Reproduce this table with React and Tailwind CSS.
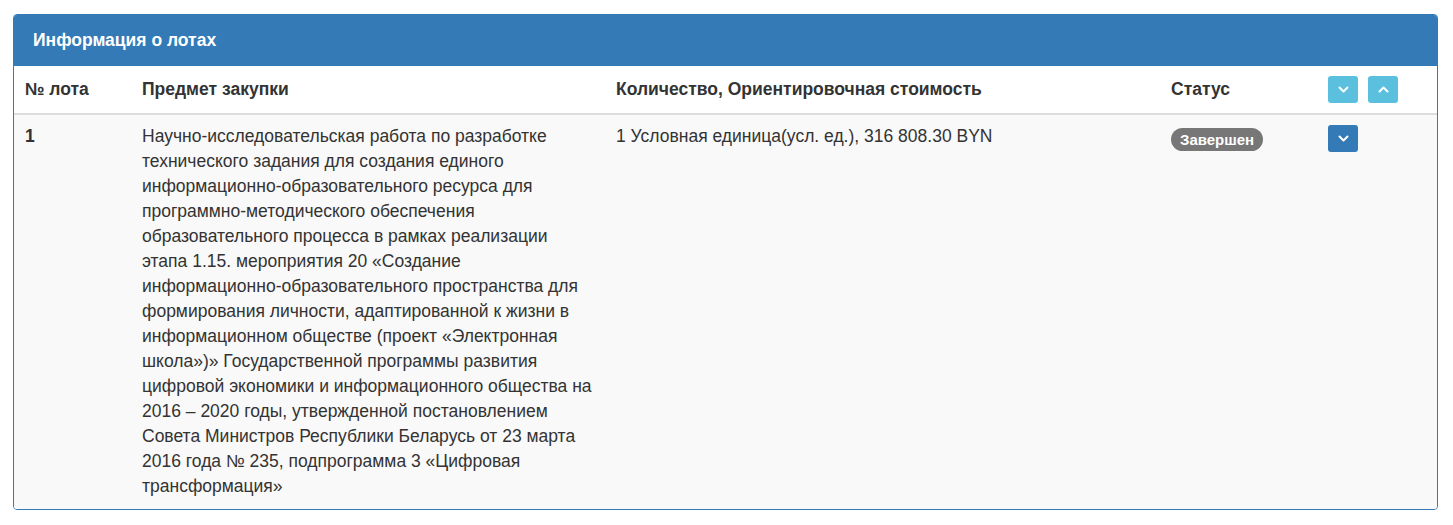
import React from 'react';

const Chevron = ({ up }) => (
  <svg width="13" height="13" viewBox="0 0 13 13" fill="none">
    <path
      d={up ? 'M2.5 8.5 L6.5 4.5 L10.5 8.5' : 'M2.5 4.5 L6.5 8.5 L10.5 4.5'}
      stroke="white"
      strokeWidth="2"
      strokeLinecap="round"
      strokeLinejoin="round"
    />
  </svg>
);

const subject =
  'Научно-исследовательская работа по разработке технического задания для создания единого информационно-образовательного ресурса для программно-методического обеспечения образовательного процесса в рамках реализации этапа 1.15. мероприятия 20 «Создание информационно-образовательного пространства для формирования личности, адаптированной к жизни в информационном обществе (проект «Электронная школа»)» Государственной программы развития цифровой экономики и информационного общества на 2016 – 2020 годы, утвержденной постановлением Совета Министров Республики Беларусь от 23 марта 2016 года № 235, подпрограмма 3 «Цифровая трансформация»';

export default function App() {
  return (
    <div className="bg-white min-h-[525px] pt-[14px] pl-[13px] font-['Liberation_Sans',Arial,sans-serif] text-[#333]">
      <div className="w-[1425px] border border-[#337ab7] rounded-[4px] overflow-hidden">
        <div className="bg-[#337ab7] h-[51px] flex items-center px-[19px]">
          <h3 className="text-white text-[17.5px] font-bold">Информация о лотах</h3>
        </div>
        <table className="w-full table-fixed border-collapse text-[17.5px] leading-[25px]">
          <colgroup>
            <col className="w-[117px]" />
            <col className="w-[474px]" />
            <col className="w-[555px]" />
            <col className="w-[157px]" />
            <col />
          </colgroup>
          <thead>
            <tr className="h-[48px] border-b-2 border-[#ddd] bg-white">
              <th className="text-left font-bold px-[11px] align-middle">№ лота</th>
              <th className="text-left font-bold px-[11px] align-middle">Предмет закупки</th>
              <th className="text-left font-bold px-[11px] align-middle">Количество, Ориентировочная стоимость</th>
              <th className="text-left font-bold px-[11px] align-middle">Статус</th>
              <th className="text-left px-[11px] align-middle">
                <div className="flex gap-[10px]">
                  <button className="w-[30px] h-[27px] rounded-[3px] bg-[#5bc0de] flex items-center justify-center">
                    <Chevron />
                  </button>
                  <button className="w-[30px] h-[27px] rounded-[3px] bg-[#5bc0de] flex items-center justify-center">
                    <Chevron up />
                  </button>
                </div>
              </th>
            </tr>
          </thead>
          <tbody>
            <tr className="bg-[#f9f9f9]">
              <td className="align-top px-[11px] pt-[9px] pb-[10px] font-bold">1</td>
              <td className="align-top px-[11px] pt-[9px] pb-[10px]">{subject}</td>
              <td className="align-top px-[11px] pt-[9px] pb-[10px]">
                1 Условная единица(усл. ед.), 316 808.30 BYN
              </td>
              <td className="align-top px-[11px] pt-[12px] pb-[10px]">
                <span className="inline-flex items-center h-[23px] px-[9px] rounded-full bg-[#777] text-white text-[15px] font-bold leading-none">
                  Завершен
                </span>
              </td>
              <td className="align-top px-[11px] pt-[10px] pb-[10px]">
                <button className="w-[30px] h-[27px] rounded-[3px] bg-[#337ab7] flex items-center justify-center">
                  <Chevron />
                </button>
              </td>
            </tr>
          </tbody>
        </table>
      </div>
    </div>
  );
}
